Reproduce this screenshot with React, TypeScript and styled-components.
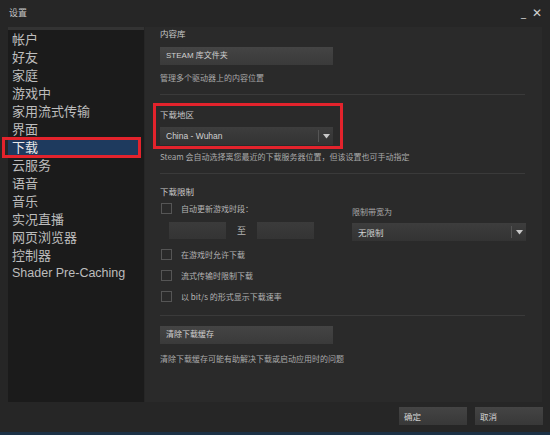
import React from 'react';
import styled, { createGlobalStyle } from 'styled-components';

const GlobalStyle = createGlobalStyle`
  html, body {
    margin: 0;
    padding: 0;
    background: #262626;
  }
  body {
    font-family: "Noto Sans CJK SC", "Liberation Sans", sans-serif;
  }
`;

const RED = '#e3232c';

const Window = styled.div`
  width: 550px;
  height: 435px;
  background: #262626;
  display: flex;
  flex-direction: column;
  overflow: hidden;
  border-bottom: 3px solid #1c3146;
  box-sizing: border-box;
`;

const TitleBar = styled.div`
  height: 25px;
  display: flex;
  align-items: center;
  justify-content: space-between;
  padding: 0 8px 2px 9px;
  color: #c4c4c4;
  font-size: 9px;
`;

const WinControls = styled.div`
  display: flex;
  gap: 6px;
  align-items: center;
  color: #d0d0d0;
  font-family: "DejaVu Sans", sans-serif;
  font-size: 12px;
`;

const Body = styled.div`
  display: flex;
  height: 375px;
  padding-left: 8px;
  padding-right: 8px;
`;

const Sidebar = styled.nav`
  width: 136px;
  background: #1b1b1b;
  border-top: 3px solid #333;
  display: flex;
  flex-direction: column;
`;

const NavItem = styled.div<{ $active?: boolean }>`
  position: relative;
  height: 18px;
  line-height: 18px;
  padding-left: 4px;
  margin-right: ${p => (p.$active ? '6px' : '0')};
  font-size: 13px;
  color: ${p => (p.$active ? '#e8e8e8' : '#bdbdbd')};
  background: ${p => (p.$active ? '#1e3a5e' : 'transparent')};
  white-space: nowrap;
  font-family: "Noto Sans CJK SC", "Liberation Sans", sans-serif;

  &.latin {
    font-family: "Liberation Sans", sans-serif;
    font-size: 12.5px;
  }

  ${p =>
    p.$active &&
    `
    &::after {
      content: '';
      position: absolute;
      left: -6px;
      right: -3px;
      top: -1px;
      bottom: -2px;
      border: 3px solid ${RED};
      pointer-events: none;
    }
  `}
`;

const Content = styled.main`
  flex: 1;
  margin-left: 1px;
  background: #2a2a2a;
  padding: 0 15px 0 15px;
  color: #bdbdbd;
  font-size: 8.5px;
`;

const Label = styled.div<{ $top?: number }>`
  margin-top: ${p => p.$top ?? 0}px;
  height: 12px;
  line-height: 12px;
  color: #c8c8c8;
  font-size: 8.5px;
`;

const Desc = styled.div<{ $top?: number }>`
  margin-top: ${p => p.$top ?? 0}px;
  height: 12px;
  line-height: 12px;
  color: #a9a9a9;
  font-size: 8px;
  white-space: nowrap;
`;

const FlatButton = styled.div<{ $top?: number; $width?: number }>`
  margin-top: ${p => p.$top ?? 0}px;
  width: ${p => p.$width ?? 173}px;
  height: 18px;
  line-height: 18px;
  padding-left: 6px;
  box-sizing: border-box;
  background: linear-gradient(#444, #3a3a3a);
  color: #d0d0d0;
  font-size: 8px;
  font-family: "Liberation Sans", "Noto Sans CJK SC", sans-serif;
`;

const Separator = styled.hr<{ $top?: number }>`
  margin: ${p => p.$top ?? 0}px 0 0 0;
  width: 365px;
  border: none;
  border-top: 1px solid #3a3a3a;
  height: 0;
`;

const RegionBox = styled.div`
  margin-top: 8px;
  margin-left: -7px;
  width: 190px;
  height: 46px;
  box-sizing: border-box;
  border: 3px solid ${RED};
  padding: 2px 0 0 4px;
`;

const Select = styled.div<{ $width: number; $top?: number }>`
  margin-top: ${p => p.$top ?? 0}px;
  width: ${p => p.$width}px;
  height: 18px;
  display: flex;
  align-items: center;
  background: linear-gradient(#3d3d3d, #333);
  color: #d0d0d0;
  font-size: 8.5px;
  font-family: "Liberation Sans", "Noto Sans CJK SC", sans-serif;
  box-sizing: border-box;
`;

const SelectText = styled.span`
  flex: 1;
  padding-left: 6px;
`;

const SelectArrow = styled.span`
  width: 14px;
  height: 12px;
  border-left: 1px solid #555;
  display: flex;
  align-items: center;
  justify-content: center;
`;

const LimitGrid = styled.div`
  margin-top: 5px;
  display: grid;
  grid-template-columns: 192px 174px;
  align-items: start;
`;

const Column = styled.div<{ $top?: number }>`
  display: flex;
  flex-direction: column;
  padding-top: ${p => p.$top ?? 0}px;
`;

const CheckRow = styled.div<{ $top?: number }>`
  margin-top: ${p => p.$top ?? 0}px;
  display: flex;
  align-items: center;
  gap: 9px;
  height: 12px;
  font-size: 8px;
  color: #b4b4b4;
  white-space: nowrap;
`;

const Box = styled.span`
  width: 9px;
  height: 9px;
  border: 1px solid #555;
  background: #2a2a2a;
  margin-left: 1px;
`;

const TimeRow = styled.div`
  margin-top: 8px;
  margin-left: 9px;
  display: flex;
  align-items: center;
  font-size: 9px;
  color: #b4b4b4;
`;

const TimeInput = styled.div`
  width: 57px;
  height: 17px;
  background: linear-gradient(#3b3b3b, #343434);
`;

const To = styled.span`
  width: 31px;
  text-align: center;
`;

const Footer = styled.div`
  flex: 1;
  display: flex;
  justify-content: flex-end;
  align-items: center;
  gap: 8px;
  padding-right: 7px;
  padding-bottom: 2px;
`;

const FooterButton = styled.div`
  width: 68px;
  height: 18px;
  line-height: 18px;
  padding-left: 5px;
  box-sizing: border-box;
  background: linear-gradient(#444, #383838);
  color: #d4d4d4;
  font-size: 8.5px;
`;

const Caret = () => (
  <svg width="7" height="5" viewBox="0 0 7 5">
    <path d="M0 0 L7 0 L3.5 4.5 Z" fill="#c8c8c8" />
  </svg>
);

const navItems = [
  '帐户',
  '好友',
  '家庭',
  '游戏中',
  '家用流式传输',
  '界面',
  '下载',
  '云服务',
  '语音',
  '音乐',
  '实况直播',
  '网页浏览器',
  '控制器',
];

const App: React.FC = () => {
  return (
    <>
      <GlobalStyle />
      <Window>
        <TitleBar>
          <span>设置</span>
          <WinControls>
            <span style={{ fontSize: 10 }}>_</span>
            <span>✕</span>
          </WinControls>
        </TitleBar>
        <Body>
          <Sidebar>
            {navItems.map(item => (
              <NavItem key={item} $active={item === '下载'}>
                {item}
              </NavItem>
            ))}
            <NavItem className="latin">Shader Pre-Caching</NavItem>
          </Sidebar>
          <Content>
            <Label $top={0}>内容库</Label>
            <FlatButton $top={8}>STEAM 库文件夹</FlatButton>
            <Desc $top={7}>管理多个驱动器上的内容位置</Desc>
            <Separator $top={10} />
            <RegionBox>
              <Label>下载地区</Label>
              <Select $width={173} $top={7}>
                <SelectText>China - Wuhan</SelectText>
                <SelectArrow>
                  <Caret />
                </SelectArrow>
              </Select>
            </RegionBox>
            <Desc $top={2}>Steam 会自动选择离您最近的下载服务器位置，但该设置也可手动指定</Desc>
            <Separator $top={10} />
            <Label $top={11}>下载限制</Label>
            <LimitGrid>
              <Column>
                <CheckRow>
                  <Box />
                  自动更新游戏时段：
                </CheckRow>
                <TimeRow>
                  <TimeInput />
                  <To>至</To>
                  <TimeInput />
                </TimeRow>
                <CheckRow $top={9}>
                  <Box />
                  在游戏时允许下载
                </CheckRow>
                <CheckRow $top={9}>
                  <Box />
                  流式传输时限制下载
                </CheckRow>
                <CheckRow $top={9}>
                  <Box />
                  以 bit/s 的形式显示下载速率
                </CheckRow>
              </Column>
              <Column $top={4}>
                <Desc>限制带宽为</Desc>
                <Select $width={174} $top={5}>
                  <SelectText>无限制</SelectText>
                  <SelectArrow>
                    <Caret />
                  </SelectArrow>
                </Select>
              </Column>
            </LimitGrid>
            <Separator $top={13} />
            <FlatButton $top={10}>清除下载缓存</FlatButton>
            <Desc $top={9}>清除下载缓存可能有助解决下载或启动应用时的问题</Desc>
          </Content>
        </Body>
        <Footer>
          <FooterButton>确定</FooterButton>
          <FooterButton>取消</FooterButton>
        </Footer>
      </Window>
    </>
  );
};

export default App;
